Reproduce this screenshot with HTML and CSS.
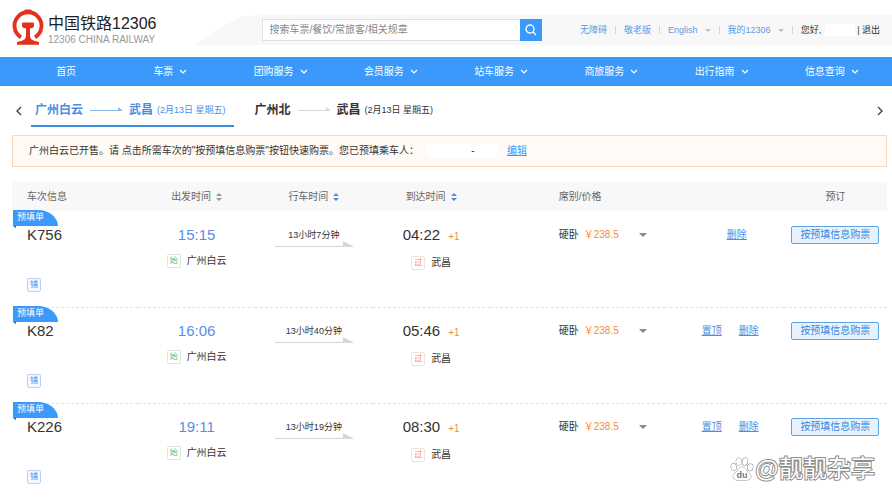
FILE: index.html
```html
<!DOCTYPE html>
<html lang="zh-CN">
<head>
<meta charset="utf-8">
<title>中国铁路12306</title>
<link rel="stylesheet" href="styles.css">
</head>
<body>
<header class="header">
  <a class="logo" href="#">
    <svg class="logo-mark" viewBox="0 0 32 36" aria-hidden="true">
      <path d="M9 28.300A13.500 13.500 0 1 1 23 28.300" fill="none" stroke="#e3311d" stroke-width="3.800"/>
      <path d="M11 4.500L13 .5H19L21 4.500Z" fill="#e3311d"/>
      <path d="M10 14.500Q10 13.500 11 13.500H21Q22 13.500 22 14.500V17.500Q21.500 19 18 19.500V26Q18 30.500 21.500 31.500L27 33V35.800H5V33L10.500 31.500Q14 30.500 14 26V19.500Q10.500 19 10 17.500Z" fill="#e3311d"/>
    </svg>
    <span class="logo-text">
      <strong>中国铁路12306</strong>
      <small>12306 CHINA RAILWAY</small>
    </span>
  </a>
  <div class="topbar">
    <form class="search">
      <input type="text" aria-label="搜索" placeholder="搜索车票/餐饮/常旅客/相关规章">
      <button type="button" aria-label="搜索">
        <svg viewBox="0 0 12 12"><circle cx="5" cy="5" r="4"/><path d="M8 8l3 3"/></svg>
      </button>
    </form>
    <div class="user-links">
      <a href="#">无障碍</a><i></i>
      <a href="#">敬老版</a><i></i>
      <a href="#">English<b class="caret"></b></a><i></i>
      <a href="#">我的12306<b class="caret"></b></a><i></i>
      <span>您好,</span><span class="user-name"></span>
      <span class="logout">| <a href="#">退出</a></span>
    </div>
  </div>
</header>

<nav class="nav">
  <a class="nav-home" href="#">首页</a>
  <a href="#">车票<svg viewBox="0 0 8 5"><path d="M1 1l3 3 3-3"/></svg></a>
  <a href="#">团购服务<svg viewBox="0 0 8 5"><path d="M1 1l3 3 3-3"/></svg></a>
  <a href="#">会员服务<svg viewBox="0 0 8 5"><path d="M1 1l3 3 3-3"/></svg></a>
  <a href="#">站车服务<svg viewBox="0 0 8 5"><path d="M1 1l3 3 3-3"/></svg></a>
  <a href="#">商旅服务<svg viewBox="0 0 8 5"><path d="M1 1l3 3 3-3"/></svg></a>
  <a href="#">出行指南<svg viewBox="0 0 8 5"><path d="M1 1l3 3 3-3"/></svg></a>
  <a href="#">信息查询<svg viewBox="0 0 8 5"><path d="M1 1l3 3 3-3"/></svg></a>
</nav>

<main class="main">
  <div class="routes">
    <button class="page-arrow" type="button" aria-label="上一个"><svg viewBox="0 0 6 10"><path d="M5 1L1 5l4 4"/></svg></button>
    <a class="route active" href="#"><strong>广州白云</strong><svg viewBox="0 0 32 5"><path d="M0 3h32v1H0zM28 0l4 3h-4z"/></svg><strong>武昌</strong><span>(2月13日 星期五)</span></a>
    <a class="route" href="#"><strong>广州北</strong><svg viewBox="0 0 32 5"><path d="M0 3h32v1H0zM28 0l4 3h-4z"/></svg><strong>武昌</strong><span>(2月13日 星期五)</span></a>
    <button class="page-arrow next" type="button" aria-label="下一个"><svg viewBox="0 0 6 10"><path d="M1 1l4 4-4 4"/></svg></button>
  </div>

  <p class="notice">
    <span>广州白云已开售。请 点击所需车次的"按预填信息购票"按钮快速购票。您已预填乘车人：</span>
    <span class="passenger">-</span>
    <a href="#">编辑</a>
  </p>

  <table class="trains">
    <colgroup>
      <col class="col-info"><col class="col-time"><col class="col-time"><col class="col-time"><col class="col-seat"><col class="col-actions"><col class="col-book">
    </colgroup>
    <thead>
      <tr>
        <th class="info">车次信息</th>
        <th>出发时间<svg class="sort" viewBox="0 0 6 8"><path d="M3 0l3 3H0zM3 8l3-3H0z"/></svg></th>
        <th>行车时间<svg class="sort on" viewBox="0 0 6 8"><path d="M3 0l3 3H0zM3 8l3-3H0z"/></svg></th>
        <th>到达时间<svg class="sort on" viewBox="0 0 6 8"><path d="M3 0l3 3H0zM3 8l3-3H0z"/></svg></th>
        <th class="seat">席别/价格</th>
        <th></th>
        <th>预订</th>
      </tr>
    </thead>
    <tbody>
      <tr>
        <td class="info"><span class="tag">预填单</span><div class="big">K756</div><span class="badge blue">铺</span></td>
        <td><div class="big depart">15:15</div><div class="station"><span class="badge green">始</span>广州白云</div></td>
        <td><div class="duration">13小时7分钟<svg viewBox="0 0 78 6"><path d="M0 5h78v1H0zM68 0l10 5H68z"/></svg></div></td>
        <td><div class="big">04:22<em>+1</em></div><div class="station"><span class="badge orange">过</span>武昌</div></td>
        <td class="seat"><div class="line">硬卧<span class="price">￥238.5</span><button class="more" type="button" aria-label="更多席别"></button></div></td>
        <td><div class="line actions single"><a href="#">删除</a></div></td>
        <td><button class="book" type="button">按预填信息购票</button></td>
      </tr>
      <tr>
        <td class="info"><span class="tag">预填单</span><div class="big">K82</div><span class="badge blue">铺</span></td>
        <td><div class="big depart">16:06</div><div class="station"><span class="badge green">始</span>广州白云</div></td>
        <td><div class="duration">13小时40分钟<svg viewBox="0 0 78 6"><path d="M0 5h78v1H0zM68 0l10 5H68z"/></svg></div></td>
        <td><div class="big">05:46<em>+1</em></div><div class="station"><span class="badge orange">过</span>武昌</div></td>
        <td class="seat"><div class="line">硬卧<span class="price">￥238.5</span><button class="more" type="button" aria-label="更多席别"></button></div></td>
        <td><div class="line actions"><a href="#">置顶</a><a href="#">删除</a></div></td>
        <td><button class="book" type="button">按预填信息购票</button></td>
      </tr>
      <tr>
        <td class="info"><span class="tag">预填单</span><div class="big">K226</div><span class="badge blue">铺</span></td>
        <td><div class="big depart">19:11</div><div class="station"><span class="badge green">始</span>广州白云</div></td>
        <td><div class="duration">13小时19分钟<svg viewBox="0 0 78 6"><path d="M0 5h78v1H0zM68 0l10 5H68z"/></svg></div></td>
        <td><div class="big">08:30<em>+1</em></div><div class="station"><span class="badge orange">过</span>武昌</div></td>
        <td class="seat"><div class="line">硬卧<span class="price">￥238.5</span><button class="more" type="button" aria-label="更多席别"></button></div></td>
        <td><div class="line actions"><a href="#">置顶</a><a href="#">删除</a></div></td>
        <td><button class="book" type="button">按预填信息购票</button></td>
      </tr>
    </tbody>
  </table>
</main>

<div class="watermark">
  <svg viewBox="0 0 24 24" aria-hidden="true">
    <g fill="#fff" stroke="#8c8c8c" stroke-width="1">
      <ellipse cx="3.800" cy="10" rx="2.600" ry="3.400" transform="rotate(-15 3.800 10)"/>
      <ellipse cx="8.800" cy="4.500" rx="2.600" ry="3.600"/>
      <ellipse cx="15" cy="4.500" rx="2.600" ry="3.600" transform="rotate(12 15 4.500)"/>
      <ellipse cx="20.200" cy="10.300" rx="2.600" ry="3.400" transform="rotate(10 20.200 10.300)"/>
      <path d="M12 10C9 10 8.500 13 6 15C3.500 17 2.800 18.500 3.300 20.500C4.200 23.500 7.500 23 12 23S19.800 23.500 20.700 20.500C21.200 18.500 20.500 17 18 15C15.500 13 15 10 12 10Z"/>
    </g>
    <text x="12" y="21" text-anchor="middle">du</text>
  </svg>
  <span>@靓靓杂享</span>
</div>
</body>
</html>
```
FILE: styles.css
```css
* { box-sizing: border-box; }

body {
  margin: 0;
  background: #fff;
  color: #333;
  font: 10px/20px "Liberation Sans", "Noto Sans CJK SC", sans-serif;
}

a { color: inherit; text-decoration: none; }
button, input { font: inherit; color: inherit; }
button { padding: 0; border: 0; background: none; }
svg { flex: none; }

/* Header */
.header { display: flex; height: 57px; }

.logo { display: flex; gap: 4px; padding: 9px 0 0 12px; flex: none; }
.logo-mark { width: 32px; height: 36px; }
.logo-text { display: flex; flex-direction: column; padding-top: 5px; white-space: nowrap; }
.logo-text strong { font-size: 16px; line-height: 20px; font-weight: 400; color: #222; }
.logo-text small { font-size: 10px; line-height: 12px; color: #999; }

.topbar {
  flex: 1;
  display: flex;
  align-items: center;
  height: 30px;
  margin: 15px 0 0 39px;
  padding: 0 12px 0 66px;
  background: #f8f8f8;
  clip-path: polygon(0 28px, 44px 2px, 66px 0, 100% 0, 100% 100%, 0 100%);
}

.search { display: flex; flex: 1; height: 22px; }
.search input {
  flex: 1;
  min-width: 0;
  padding: 0 7px;
  border: 1px solid #e2e2e2;
  border-right: 0;
  background: #fff;
  outline: 0;
}
.search input::placeholder { color: #888; }
.search button {
  display: grid;
  place-items: center;
  width: 22px;
  background: #3b99fc;
}
.search svg { width: 12px; height: 12px; fill: none; stroke: #fff; stroke-width: 1.3; }

.user-links {
  display: flex;
  align-items: center;
  gap: 8px;
  margin-left: 38px;
  font-size: 9px;
  white-space: nowrap;
}
.user-links > a { color: #5a9be6; }
.user-links i { width: 1px; height: 8px; background: #d5d5d5; }
.user-name { width: 30px; height: 12px; margin-left: -4px; background: #fff; }
.logout { margin-left: -6px; }
.caret {
  display: inline-block;
  margin-left: 7px;
  border: 3px solid transparent;
  border-top-color: #a9c4e2;
  border-bottom: 0;
  vertical-align: 1px;
}

/* Main navigation */
.nav {
  display: grid;
  grid-template-columns: repeat(8, 1fr);
  height: 29px;
  padding: 0 5px;
  background: #3b99fc;
  color: #fff;
}
.nav a { display: flex; align-items: center; justify-content: center; gap: 6px; }
.nav .nav-home { padding-left: 12px; }
.nav svg { width: 8px; height: 5px; fill: none; stroke: #fff; stroke-width: 1.2; }

/* Route tabs */
.main { padding: 0 5px 0 12px; }

.routes { display: flex; height: 41px; align-items: stretch; padding-top: 8px; }
.page-arrow { display: grid; place-items: center; width: 14px; margin-right: 5px; }
.page-arrow.next { margin: 0 0 0 auto; }
.page-arrow svg { width: 6px; height: 10px; fill: none; stroke: #444; stroke-width: 1.4; }
.route {
  display: flex;
  align-items: center;
  padding: 0 8px 0 4px;
  margin-right: 17px;
  border-bottom: 2px solid transparent;
  white-space: nowrap;
}
.route strong { font-size: 12px; }
.route svg { width: 32px; height: 5px; margin: 0 7px; fill: #d8d8d8; }
.route span { margin-left: 4px; font-size: 9px; }
.route.active { color: #4a90e2; border-color: #3b8be0; }
.route.active svg { fill: #8db8ea; }

/* Notice */
.notice {
  display: flex;
  align-items: center;
  height: 32px;
  margin: 8px 0 15px;
  padding: 0 16px;
  border: 1px solid #f9d9bd;
  background: #fffaf6;
}
.passenger { flex: 0 0 70px; margin: 0 10px 0 8px; padding-left: 22px; background: #fff; text-align: center; line-height: 14px; }
.notice a { color: #3b99fc; text-decoration: underline; }

/* Train list */
.trains { width: 100%; border-collapse: separate; border-spacing: 0; table-layout: fixed; }
.col-info { width: 14.4%; }
.col-time { width: 13.4%; }
.col-seat { width: 20%; }
.col-actions { width: 13.6%; }
.col-book { width: 11.8%; }

th {
  height: 29px;
  padding: 0;
  background: #f8f8f8;
  color: #666;
  font-weight: 400;
}
.sort { width: 6px; height: 8px; margin-left: 5px; vertical-align: -1px; fill: #999; }
.sort.on { fill: #4a90d9; }

td {
  position: relative;
  height: 96px;
  padding: 13px 0 0;
  vertical-align: top;
  text-align: center;
  border-top: 1px dashed #e2e2e2;
}
tbody tr:first-child td { border-top-color: transparent; }
.info { padding-left: 15px; text-align: left; }
.seat { padding-left: 69px; text-align: left; }

.tag {
  position: absolute;
  top: -2px;
  left: 1px;
  width: 45px;
  height: 16px;
  padding-left: 4px;
  border-radius: 0 20px 0 0 / 0 16px 0 0;
  background: #3b99fc;
  color: #fff;
  font-size: 9px;
  line-height: 15px;
}
.tag::after {
  content: "";
  position: absolute;
  top: 100%;
  left: 0;
  border-top: 2px solid #2a5f9e;
  border-left: 3px solid transparent;
}

.big { font-size: 15px; line-height: 20px; }
.big em { margin-left: 8px; color: #f28b4b; font-size: 10px; font-style: normal; }
.depart { color: #5a8fe0; }

.station { display: flex; align-items: center; justify-content: center; gap: 6px; margin-top: 6px; }
.badge {
  display: inline-block;
  width: 14px;
  height: 14px;
  border: 1px solid;
  border-radius: 2px;
  font-size: 8px;
  line-height: 12px;
  text-align: center;
}
.info .badge { display: block; margin-top: 33px; }
.blue { color: #4a90e2; border-color: #b5d3f5; background: #f3f9ff; }
.green { color: #6fb57c; border-color: #d3ebd7; }
.orange { color: #f28b4b; border-color: #fbe0d0; }

.duration {
  display: flex;
  flex-direction: column;
  align-items: center;
  font-size: 9px;
  line-height: 20px;
}
.duration svg { width: 78px; height: 6px; margin-top: -4px; fill: #d6d6d6; }

.line { display: flex; align-items: center; height: 20px; }
.price { margin-left: 5px; color: #f28b3c; }
.more {
  margin-left: 20px;
  border: 4px solid transparent;
  border-top-color: #888;
  border-bottom: 0;
}
.actions { justify-content: flex-end; gap: 17px; padding-right: 25px; }
.actions.single { padding-right: 37px; }
.actions a { color: #4a90e2; text-decoration: underline; }

.book {
  width: 88px;
  height: 18px;
  margin-top: 1px;
  border: 1px solid #5fa4e6;
  border-radius: 2px;
  background: #e6f3ff;
  color: #3b85d8;
  line-height: 16px;
  white-space: nowrap;
}

/* Watermark */
.watermark {
  position: absolute;
  right: 17px;
  top: 455px;
  display: flex;
  align-items: center;
  gap: 1px;
  color: #fff;
  font-size: 24px;
  line-height: 28px;
  -webkit-text-stroke: 2px #8c8c8c;
  paint-order: stroke fill;
}
.watermark svg { width: 24px; height: 24px; }
.watermark text { fill: #777; font-size: 9px; font-weight: 700; -webkit-text-stroke: 0; }
```
